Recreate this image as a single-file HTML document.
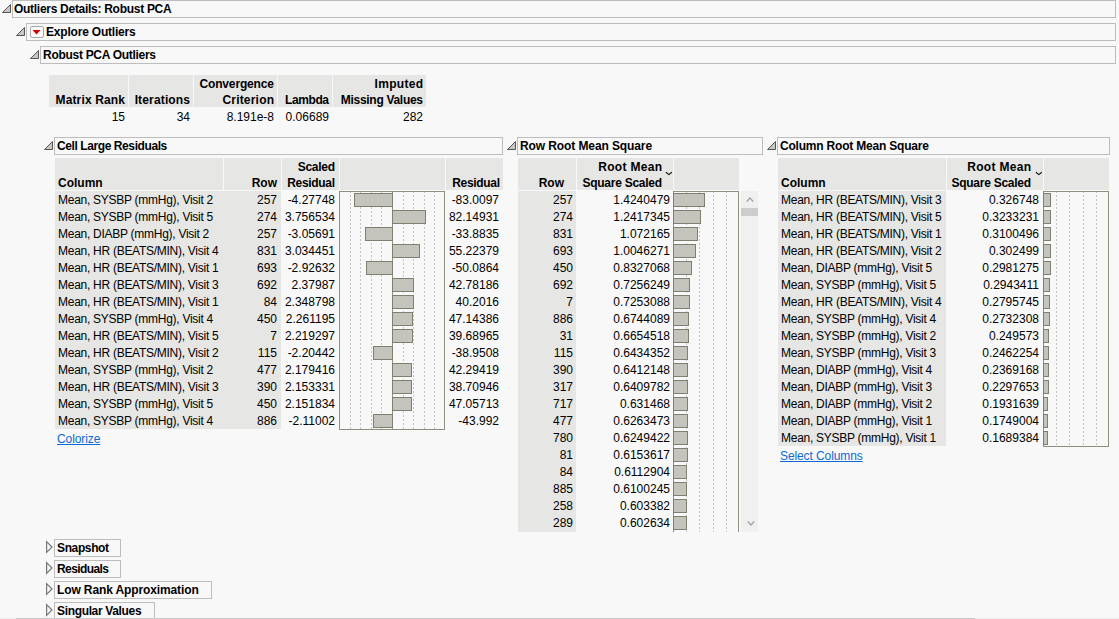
<!DOCTYPE html>
<html><head><meta charset="utf-8"><style>
html,body{margin:0;padding:0}
body{width:1119px;height:619px;overflow:hidden;position:relative;background:#f8f8f8;font-family:"Liberation Sans",sans-serif;font-size:12px;color:#000}
.t{position:absolute;white-space:nowrap;line-height:16px;}
.tx{letter-spacing:-0.27px}
.tb{letter-spacing:-0.2px}
.link{text-decoration:underline;letter-spacing:-0.1px}
</style></head><body>
<div style="position:absolute;left:12px;top:0px;width:1104px;height:18px;box-sizing:border-box;border:1px solid #bdbdbd;"></div>
<svg style="position:absolute;left:2px;top:4px" width="12" height="12"><polygon points="0.5,8.5 8.5,0.5 8.5,8.5" fill="#c6c6c6" stroke="#555" stroke-width="1" stroke-linejoin="round"/></svg>
<div class="t tb" style="top:1px;left:14px;font-weight:bold;letter-spacing:-0.285px;">Outliers Details: Robust PCA</div>
<div style="position:absolute;left:26px;top:23px;width:1090px;height:18px;box-sizing:border-box;border:1px solid #bdbdbd;"></div>
<svg style="position:absolute;left:16px;top:27px" width="12" height="12"><polygon points="0.5,8.5 8.5,0.5 8.5,8.5" fill="#c6c6c6" stroke="#555" stroke-width="1" stroke-linejoin="round"/></svg>
<div style="position:absolute;left:30px;top:26px;width:14px;height:12px;box-sizing:border-box;border:1px solid #a8a8a8;border-radius:2px;background:#fcfcfc"></div>
<svg style="position:absolute;left:32px;top:29px" width="10" height="6"><polygon points="0.5,1 8.5,1 4.5,5.5" fill="#d40000"/></svg>
<div class="t tb" style="top:24px;left:46px;font-weight:bold;letter-spacing:-0.2px;">Explore Outliers</div>
<div style="position:absolute;left:40px;top:46px;width:1076px;height:18px;box-sizing:border-box;border:1px solid #bdbdbd;"></div>
<svg style="position:absolute;left:30px;top:50px" width="12" height="12"><polygon points="0.5,8.5 8.5,0.5 8.5,8.5" fill="#c6c6c6" stroke="#555" stroke-width="1" stroke-linejoin="round"/></svg>
<div class="t tb" style="top:47px;left:43px;font-weight:bold;letter-spacing:-0.29px;">Robust PCA Outliers</div>
<div style="position:absolute;left:49px;top:75px;width:79px;height:32px;background:#e6e6e4"></div>
<div class="t " style="top:92px;left:-174.85px;width:300px;text-align:right;font-weight:bold;letter-spacing:0.15px;">Matrix Rank</div>
<div class="t " style="top:109px;left:-175px;width:300px;text-align:right;">15</div>
<div style="position:absolute;left:129px;top:75px;width:64px;height:32px;background:#e6e6e4"></div>
<div class="t " style="top:92px;left:-109.85px;width:300px;text-align:right;font-weight:bold;letter-spacing:0.15px;">Iterations</div>
<div class="t " style="top:109px;left:-110px;width:300px;text-align:right;">34</div>
<div style="position:absolute;left:194px;top:75px;width:83px;height:32px;background:#e6e6e4"></div>
<div class="t " style="top:76px;left:-26.15px;width:300px;text-align:right;font-weight:bold;letter-spacing:-0.15px;">Convergence</div>
<div class="t " style="top:92px;left:-25.8px;width:300px;text-align:right;font-weight:bold;letter-spacing:0.2px;">Criterion</div>
<div class="t " style="top:109px;left:-26px;width:300px;text-align:right;">8.191e-8</div>
<div style="position:absolute;left:278px;top:75px;width:54px;height:32px;background:#e6e6e4"></div>
<div class="t " style="top:92px;left:28.6px;width:300px;text-align:right;font-weight:bold;letter-spacing:-0.4px;">Lambda</div>
<div class="t " style="top:109px;left:29px;width:300px;text-align:right;">0.06689</div>
<div style="position:absolute;left:333px;top:75px;width:93px;height:32px;background:#e6e6e4"></div>
<div class="t " style="top:76px;left:123.3px;width:300px;text-align:right;font-weight:bold;letter-spacing:0.3px;">Imputed</div>
<div class="t " style="top:92px;left:122.7px;width:300px;text-align:right;font-weight:bold;letter-spacing:-0.3px;">Missing Values</div>
<div class="t " style="top:109px;left:123px;width:300px;text-align:right;">282</div>
<svg style="position:absolute;left:44px;top:141px" width="12" height="12"><polygon points="0.5,8.5 8.5,0.5 8.5,8.5" fill="#c6c6c6" stroke="#555" stroke-width="1" stroke-linejoin="round"/></svg>
<div style="position:absolute;left:54px;top:137px;width:449px;height:18px;box-sizing:border-box;border:1px solid #bdbdbd;"></div>
<div class="t tb" style="top:138px;left:57px;font-weight:bold;letter-spacing:-0.41px;">Cell Large Residuals</div>
<div style="position:absolute;left:55px;top:158px;width:168px;height:32px;background:#e6e6e4"></div>
<div style="position:absolute;left:224px;top:158px;width:57px;height:32px;background:#e6e6e4"></div>
<div style="position:absolute;left:282px;top:158px;width:57px;height:32px;background:#e6e6e4"></div>
<div style="position:absolute;left:340px;top:158px;width:105px;height:32px;background:#e6e6e4"></div>
<div style="position:absolute;left:446px;top:158px;width:57px;height:32px;background:#e6e6e4"></div>
<div class="t " style="top:175px;left:58px;font-weight:bold;">Column</div>
<div class="t " style="top:175px;left:-23px;width:300px;text-align:right;font-weight:bold;">Row</div>
<div class="t " style="top:159px;left:34.7px;width:300px;text-align:right;font-weight:bold;letter-spacing:-0.3px;">Scaled</div>
<div class="t " style="top:175px;left:34.67px;width:300px;text-align:right;font-weight:bold;letter-spacing:-0.33px;">Residual</div>
<div class="t " style="top:175px;left:199.67px;width:300px;text-align:right;font-weight:bold;letter-spacing:-0.33px;">Residual</div>
<div style="position:absolute;left:55px;top:191px;width:226px;height:238px;background:#e6e6e4"></div>
<div style="position:absolute;left:339px;top:191px;width:106px;height:239px;box-sizing:border-box;border:1px solid #8f8f80;"></div>
<div style="position:absolute;left:350px;top:192px;width:1px;height:237px;background:repeating-linear-gradient(to bottom,#c2c2c2 0 1px,transparent 1px 3px,#c2c2c2 3px 4px)"></div>
<div style="position:absolute;left:360px;top:192px;width:1px;height:237px;background:repeating-linear-gradient(to bottom,#c2c2c2 0 1px,transparent 1px 3px,#c2c2c2 3px 4px)"></div>
<div style="position:absolute;left:371px;top:192px;width:1px;height:237px;background:repeating-linear-gradient(to bottom,#c2c2c2 0 1px,transparent 1px 3px,#c2c2c2 3px 4px)"></div>
<div style="position:absolute;left:381px;top:192px;width:1px;height:237px;background:repeating-linear-gradient(to bottom,#c2c2c2 0 1px,transparent 1px 3px,#c2c2c2 3px 4px)"></div>
<div style="position:absolute;left:403px;top:192px;width:1px;height:237px;background:repeating-linear-gradient(to bottom,#c2c2c2 0 1px,transparent 1px 3px,#c2c2c2 3px 4px)"></div>
<div style="position:absolute;left:413px;top:192px;width:1px;height:237px;background:repeating-linear-gradient(to bottom,#c2c2c2 0 1px,transparent 1px 3px,#c2c2c2 3px 4px)"></div>
<div style="position:absolute;left:424px;top:192px;width:1px;height:237px;background:repeating-linear-gradient(to bottom,#c2c2c2 0 1px,transparent 1px 3px,#c2c2c2 3px 4px)"></div>
<div style="position:absolute;left:434px;top:192px;width:1px;height:237px;background:repeating-linear-gradient(to bottom,#c2c2c2 0 1px,transparent 1px 3px,#c2c2c2 3px 4px)"></div>
<div style="position:absolute;left:392px;top:192px;width:1px;height:237px;background:#8f8f80"></div>
<div class="t tx" style="top:192px;left:58px;">Mean, SYSBP (mmHg), Visit 2</div>
<div class="t " style="top:192px;left:-23px;width:300px;text-align:right;">257</div>
<div class="t " style="top:192px;left:35px;width:300px;text-align:right;">-4.27748</div>
<div class="t " style="top:192px;left:199px;width:300px;text-align:right;">-83.0097</div>
<div style="position:absolute;left:354px;top:193px;width:39px;height:14px;box-sizing:border-box;background:#c4c4bc;border:1px solid #7f7f70;"></div>
<div class="t tx" style="top:209px;left:58px;">Mean, SYSBP (mmHg), Visit 5</div>
<div class="t " style="top:209px;left:-23px;width:300px;text-align:right;">274</div>
<div class="t " style="top:209px;left:35px;width:300px;text-align:right;">3.756534</div>
<div class="t " style="top:209px;left:199px;width:300px;text-align:right;">82.14931</div>
<div style="position:absolute;left:392px;top:210px;width:34px;height:14px;box-sizing:border-box;background:#c4c4bc;border:1px solid #7f7f70;"></div>
<div class="t tx" style="top:226px;left:58px;">Mean, DIABP (mmHg), Visit 2</div>
<div class="t " style="top:226px;left:-23px;width:300px;text-align:right;">257</div>
<div class="t " style="top:226px;left:35px;width:300px;text-align:right;">-3.05691</div>
<div class="t " style="top:226px;left:199px;width:300px;text-align:right;">-33.8835</div>
<div style="position:absolute;left:365px;top:227px;width:28px;height:14px;box-sizing:border-box;background:#c4c4bc;border:1px solid #7f7f70;"></div>
<div class="t tx" style="top:243px;left:58px;">Mean, HR (BEATS/MIN), Visit 4</div>
<div class="t " style="top:243px;left:-23px;width:300px;text-align:right;">831</div>
<div class="t " style="top:243px;left:35px;width:300px;text-align:right;">3.034451</div>
<div class="t " style="top:243px;left:199px;width:300px;text-align:right;">55.22379</div>
<div style="position:absolute;left:392px;top:244px;width:28px;height:14px;box-sizing:border-box;background:#c4c4bc;border:1px solid #7f7f70;"></div>
<div class="t tx" style="top:260px;left:58px;">Mean, HR (BEATS/MIN), Visit 1</div>
<div class="t " style="top:260px;left:-23px;width:300px;text-align:right;">693</div>
<div class="t " style="top:260px;left:35px;width:300px;text-align:right;">-2.92632</div>
<div class="t " style="top:260px;left:199px;width:300px;text-align:right;">-50.0864</div>
<div style="position:absolute;left:366px;top:261px;width:27px;height:14px;box-sizing:border-box;background:#c4c4bc;border:1px solid #7f7f70;"></div>
<div class="t tx" style="top:277px;left:58px;">Mean, HR (BEATS/MIN), Visit 3</div>
<div class="t " style="top:277px;left:-23px;width:300px;text-align:right;">692</div>
<div class="t " style="top:277px;left:35px;width:300px;text-align:right;">2.37987</div>
<div class="t " style="top:277px;left:199px;width:300px;text-align:right;">42.78186</div>
<div style="position:absolute;left:392px;top:278px;width:22px;height:14px;box-sizing:border-box;background:#c4c4bc;border:1px solid #7f7f70;"></div>
<div class="t tx" style="top:294px;left:58px;">Mean, HR (BEATS/MIN), Visit 1</div>
<div class="t " style="top:294px;left:-23px;width:300px;text-align:right;">84</div>
<div class="t " style="top:294px;left:35px;width:300px;text-align:right;">2.348798</div>
<div class="t " style="top:294px;left:199px;width:300px;text-align:right;">40.2016</div>
<div style="position:absolute;left:392px;top:295px;width:22px;height:14px;box-sizing:border-box;background:#c4c4bc;border:1px solid #7f7f70;"></div>
<div class="t tx" style="top:311px;left:58px;">Mean, SYSBP (mmHg), Visit 4</div>
<div class="t " style="top:311px;left:-23px;width:300px;text-align:right;">450</div>
<div class="t " style="top:311px;left:35px;width:300px;text-align:right;">2.261195</div>
<div class="t " style="top:311px;left:199px;width:300px;text-align:right;">47.14386</div>
<div style="position:absolute;left:392px;top:312px;width:21px;height:14px;box-sizing:border-box;background:#c4c4bc;border:1px solid #7f7f70;"></div>
<div class="t tx" style="top:328px;left:58px;">Mean, HR (BEATS/MIN), Visit 5</div>
<div class="t " style="top:328px;left:-23px;width:300px;text-align:right;">7</div>
<div class="t " style="top:328px;left:35px;width:300px;text-align:right;">2.219297</div>
<div class="t " style="top:328px;left:199px;width:300px;text-align:right;">39.68965</div>
<div style="position:absolute;left:392px;top:329px;width:21px;height:14px;box-sizing:border-box;background:#c4c4bc;border:1px solid #7f7f70;"></div>
<div class="t tx" style="top:345px;left:58px;">Mean, HR (BEATS/MIN), Visit 2</div>
<div class="t " style="top:345px;left:-23px;width:300px;text-align:right;">115</div>
<div class="t " style="top:345px;left:35px;width:300px;text-align:right;">-2.20442</div>
<div class="t " style="top:345px;left:199px;width:300px;text-align:right;">-38.9508</div>
<div style="position:absolute;left:373px;top:346px;width:20px;height:14px;box-sizing:border-box;background:#c4c4bc;border:1px solid #7f7f70;"></div>
<div class="t tx" style="top:362px;left:58px;">Mean, SYSBP (mmHg), Visit 2</div>
<div class="t " style="top:362px;left:-23px;width:300px;text-align:right;">477</div>
<div class="t " style="top:362px;left:35px;width:300px;text-align:right;">2.179416</div>
<div class="t " style="top:362px;left:199px;width:300px;text-align:right;">42.29419</div>
<div style="position:absolute;left:392px;top:363px;width:20px;height:14px;box-sizing:border-box;background:#c4c4bc;border:1px solid #7f7f70;"></div>
<div class="t tx" style="top:379px;left:58px;">Mean, HR (BEATS/MIN), Visit 3</div>
<div class="t " style="top:379px;left:-23px;width:300px;text-align:right;">390</div>
<div class="t " style="top:379px;left:35px;width:300px;text-align:right;">2.153331</div>
<div class="t " style="top:379px;left:199px;width:300px;text-align:right;">38.70946</div>
<div style="position:absolute;left:392px;top:380px;width:20px;height:14px;box-sizing:border-box;background:#c4c4bc;border:1px solid #7f7f70;"></div>
<div class="t tx" style="top:396px;left:58px;">Mean, SYSBP (mmHg), Visit 5</div>
<div class="t " style="top:396px;left:-23px;width:300px;text-align:right;">450</div>
<div class="t " style="top:396px;left:35px;width:300px;text-align:right;">2.151834</div>
<div class="t " style="top:396px;left:199px;width:300px;text-align:right;">47.05713</div>
<div style="position:absolute;left:392px;top:397px;width:20px;height:14px;box-sizing:border-box;background:#c4c4bc;border:1px solid #7f7f70;"></div>
<div class="t tx" style="top:413px;left:58px;">Mean, SYSBP (mmHg), Visit 4</div>
<div class="t " style="top:413px;left:-23px;width:300px;text-align:right;">886</div>
<div class="t " style="top:413px;left:35px;width:300px;text-align:right;">-2.11002</div>
<div class="t " style="top:413px;left:199px;width:300px;text-align:right;">-43.992</div>
<div style="position:absolute;left:373px;top:414px;width:20px;height:14px;box-sizing:border-box;background:#c4c4bc;border:1px solid #7f7f70;"></div>
<div class="t tx link" style="top:431px;left:57px;color:#0b6bd3;">Colorize</div>
<svg style="position:absolute;left:507px;top:141px" width="12" height="12"><polygon points="0.5,8.5 8.5,0.5 8.5,8.5" fill="#c6c6c6" stroke="#555" stroke-width="1" stroke-linejoin="round"/></svg>
<div style="position:absolute;left:517px;top:137px;width:246px;height:18px;box-sizing:border-box;border:1px solid #bdbdbd;"></div>
<div class="t tb" style="top:138px;left:520px;font-weight:bold;letter-spacing:-0.1px;">Row Root Mean Square</div>
<div style="position:absolute;left:518px;top:158px;width:58px;height:32px;background:#e6e6e4"></div>
<div style="position:absolute;left:577px;top:158px;width:96px;height:32px;background:#e6e6e4"></div>
<div style="position:absolute;left:674px;top:158px;width:65px;height:32px;background:#e6e6e4"></div>
<div class="t " style="top:175px;left:264px;width:300px;text-align:right;font-weight:bold;">Row</div>
<div class="t " style="top:159px;left:362.3px;width:300px;text-align:right;font-weight:bold;letter-spacing:0.3px;">Root Mean</div>
<div class="t " style="top:175px;left:361.73px;width:300px;text-align:right;font-weight:bold;letter-spacing:-0.27px;">Square Scaled</div>
<svg style="position:absolute;left:664px;top:170px" width="10" height="7"><polyline points="1.9,2.2 4.9,4.6 7.8,2.2" fill="none" stroke="#111" stroke-width="1.15"/></svg>
<div style="position:absolute;left:518px;top:191px;width:58px;height:341px;background:#e6e6e4"></div>
<div style="position:absolute;left:673px;top:191px;width:66px;height:341px;overflow:hidden">
<div style="position:absolute;left:0px;top:0px;width:66px;height:350px;box-sizing:border-box;border:1px solid #8f8f80;"></div>
<div style="position:absolute;left:13px;top:1px;width:1px;height:340px;background:repeating-linear-gradient(to bottom,#c2c2c2 0 1px,transparent 1px 3px,#c2c2c2 3px 4px)"></div>
<div style="position:absolute;left:26px;top:1px;width:1px;height:340px;background:repeating-linear-gradient(to bottom,#c2c2c2 0 1px,transparent 1px 3px,#c2c2c2 3px 4px)"></div>
<div style="position:absolute;left:40px;top:1px;width:1px;height:340px;background:repeating-linear-gradient(to bottom,#c2c2c2 0 1px,transparent 1px 3px,#c2c2c2 3px 4px)"></div>
<div style="position:absolute;left:53px;top:1px;width:1px;height:340px;background:repeating-linear-gradient(to bottom,#c2c2c2 0 1px,transparent 1px 3px,#c2c2c2 3px 4px)"></div>
<div style="position:absolute;left:0px;top:2px;width:32px;height:14px;box-sizing:border-box;background:#c4c4bc;border:1px solid #7f7f70;"></div>
<div style="position:absolute;left:0px;top:19px;width:28px;height:14px;box-sizing:border-box;background:#c4c4bc;border:1px solid #7f7f70;"></div>
<div style="position:absolute;left:0px;top:36px;width:25px;height:14px;box-sizing:border-box;background:#c4c4bc;border:1px solid #7f7f70;"></div>
<div style="position:absolute;left:0px;top:53px;width:23px;height:14px;box-sizing:border-box;background:#c4c4bc;border:1px solid #7f7f70;"></div>
<div style="position:absolute;left:0px;top:70px;width:19px;height:14px;box-sizing:border-box;background:#c4c4bc;border:1px solid #7f7f70;"></div>
<div style="position:absolute;left:0px;top:87px;width:17px;height:14px;box-sizing:border-box;background:#c4c4bc;border:1px solid #7f7f70;"></div>
<div style="position:absolute;left:0px;top:104px;width:17px;height:14px;box-sizing:border-box;background:#c4c4bc;border:1px solid #7f7f70;"></div>
<div style="position:absolute;left:0px;top:121px;width:16px;height:14px;box-sizing:border-box;background:#c4c4bc;border:1px solid #7f7f70;"></div>
<div style="position:absolute;left:0px;top:138px;width:16px;height:14px;box-sizing:border-box;background:#c4c4bc;border:1px solid #7f7f70;"></div>
<div style="position:absolute;left:0px;top:155px;width:15px;height:14px;box-sizing:border-box;background:#c4c4bc;border:1px solid #7f7f70;"></div>
<div style="position:absolute;left:0px;top:172px;width:15px;height:14px;box-sizing:border-box;background:#c4c4bc;border:1px solid #7f7f70;"></div>
<div style="position:absolute;left:0px;top:189px;width:15px;height:14px;box-sizing:border-box;background:#c4c4bc;border:1px solid #7f7f70;"></div>
<div style="position:absolute;left:0px;top:206px;width:15px;height:14px;box-sizing:border-box;background:#c4c4bc;border:1px solid #7f7f70;"></div>
<div style="position:absolute;left:0px;top:223px;width:15px;height:14px;box-sizing:border-box;background:#c4c4bc;border:1px solid #7f7f70;"></div>
<div style="position:absolute;left:0px;top:240px;width:15px;height:14px;box-sizing:border-box;background:#c4c4bc;border:1px solid #7f7f70;"></div>
<div style="position:absolute;left:0px;top:257px;width:15px;height:14px;box-sizing:border-box;background:#c4c4bc;border:1px solid #7f7f70;"></div>
<div style="position:absolute;left:0px;top:274px;width:14px;height:14px;box-sizing:border-box;background:#c4c4bc;border:1px solid #7f7f70;"></div>
<div style="position:absolute;left:0px;top:291px;width:14px;height:14px;box-sizing:border-box;background:#c4c4bc;border:1px solid #7f7f70;"></div>
<div style="position:absolute;left:0px;top:308px;width:14px;height:14px;box-sizing:border-box;background:#c4c4bc;border:1px solid #7f7f70;"></div>
<div style="position:absolute;left:0px;top:325px;width:14px;height:14px;box-sizing:border-box;background:#c4c4bc;border:1px solid #7f7f70;"></div>
</div>
<div class="t " style="top:192px;left:273px;width:300px;text-align:right;">257</div>
<div class="t " style="top:192px;left:370px;width:300px;text-align:right;">1.4240479</div>
<div class="t " style="top:209px;left:273px;width:300px;text-align:right;">274</div>
<div class="t " style="top:209px;left:370px;width:300px;text-align:right;">1.2417345</div>
<div class="t " style="top:226px;left:273px;width:300px;text-align:right;">831</div>
<div class="t " style="top:226px;left:370px;width:300px;text-align:right;">1.072165</div>
<div class="t " style="top:243px;left:273px;width:300px;text-align:right;">693</div>
<div class="t " style="top:243px;left:370px;width:300px;text-align:right;">1.0046271</div>
<div class="t " style="top:260px;left:273px;width:300px;text-align:right;">450</div>
<div class="t " style="top:260px;left:370px;width:300px;text-align:right;">0.8327068</div>
<div class="t " style="top:277px;left:273px;width:300px;text-align:right;">692</div>
<div class="t " style="top:277px;left:370px;width:300px;text-align:right;">0.7256249</div>
<div class="t " style="top:294px;left:273px;width:300px;text-align:right;">7</div>
<div class="t " style="top:294px;left:370px;width:300px;text-align:right;">0.7253088</div>
<div class="t " style="top:311px;left:273px;width:300px;text-align:right;">886</div>
<div class="t " style="top:311px;left:370px;width:300px;text-align:right;">0.6744089</div>
<div class="t " style="top:328px;left:273px;width:300px;text-align:right;">31</div>
<div class="t " style="top:328px;left:370px;width:300px;text-align:right;">0.6654518</div>
<div class="t " style="top:345px;left:273px;width:300px;text-align:right;">115</div>
<div class="t " style="top:345px;left:370px;width:300px;text-align:right;">0.6434352</div>
<div class="t " style="top:362px;left:273px;width:300px;text-align:right;">390</div>
<div class="t " style="top:362px;left:370px;width:300px;text-align:right;">0.6412148</div>
<div class="t " style="top:379px;left:273px;width:300px;text-align:right;">317</div>
<div class="t " style="top:379px;left:370px;width:300px;text-align:right;">0.6409782</div>
<div class="t " style="top:396px;left:273px;width:300px;text-align:right;">717</div>
<div class="t " style="top:396px;left:370px;width:300px;text-align:right;">0.631468</div>
<div class="t " style="top:413px;left:273px;width:300px;text-align:right;">477</div>
<div class="t " style="top:413px;left:370px;width:300px;text-align:right;">0.6263473</div>
<div class="t " style="top:430px;left:273px;width:300px;text-align:right;">780</div>
<div class="t " style="top:430px;left:370px;width:300px;text-align:right;">0.6249422</div>
<div class="t " style="top:447px;left:273px;width:300px;text-align:right;">81</div>
<div class="t " style="top:447px;left:370px;width:300px;text-align:right;">0.6153617</div>
<div class="t " style="top:464px;left:273px;width:300px;text-align:right;">84</div>
<div class="t " style="top:464px;left:370px;width:300px;text-align:right;">0.6112904</div>
<div class="t " style="top:481px;left:273px;width:300px;text-align:right;">885</div>
<div class="t " style="top:481px;left:370px;width:300px;text-align:right;">0.6100245</div>
<div class="t " style="top:498px;left:273px;width:300px;text-align:right;">258</div>
<div class="t " style="top:498px;left:370px;width:300px;text-align:right;">0.603382</div>
<div class="t " style="top:515px;left:273px;width:300px;text-align:right;">289</div>
<div class="t " style="top:515px;left:370px;width:300px;text-align:right;">0.602634</div>
<div style="position:absolute;left:741px;top:191px;width:17px;height:341px;background:#f0f0f0"></div>
<div style="position:absolute;left:741px;top:208px;width:17px;height:8px;background:#cdcdcd"></div>
<svg style="position:absolute;left:746px;top:196px" width="9" height="7"><polyline points="0.8,5.5 4,2 7.2,5.5" fill="none" stroke="#a0a0a0" stroke-width="1.2"/></svg>
<svg style="position:absolute;left:746.5px;top:520px" width="9" height="7"><polyline points="0.8,1.5 4,5 7.2,1.5" fill="none" stroke="#a0a0a0" stroke-width="1.2"/></svg>
<svg style="position:absolute;left:767px;top:141px" width="12" height="12"><polygon points="0.5,8.5 8.5,0.5 8.5,8.5" fill="#c6c6c6" stroke="#555" stroke-width="1" stroke-linejoin="round"/></svg>
<div style="position:absolute;left:777px;top:137px;width:333px;height:18px;box-sizing:border-box;border:1px solid #bdbdbd;"></div>
<div class="t tb" style="top:138px;left:780px;font-weight:bold;letter-spacing:-0.2px;">Column Root Mean Square</div>
<div style="position:absolute;left:778px;top:158px;width:168px;height:32px;background:#e6e6e4"></div>
<div style="position:absolute;left:947px;top:158px;width:96px;height:32px;background:#e6e6e4"></div>
<div style="position:absolute;left:1044px;top:158px;width:65px;height:32px;background:#e6e6e4"></div>
<div class="t " style="top:175px;left:781px;font-weight:bold;">Column</div>
<div class="t " style="top:159px;left:731.3px;width:300px;text-align:right;font-weight:bold;letter-spacing:0.3px;">Root Mean</div>
<div class="t " style="top:175px;left:730.73px;width:300px;text-align:right;font-weight:bold;letter-spacing:-0.27px;">Square Scaled</div>
<svg style="position:absolute;left:1034px;top:170px" width="10" height="7"><polyline points="1.9,2.2 4.9,4.6 7.8,2.2" fill="none" stroke="#111" stroke-width="1.15"/></svg>
<div style="position:absolute;left:778px;top:191px;width:168px;height:255px;background:#e6e6e4"></div>
<div style="position:absolute;left:1043px;top:191px;width:66px;height:256px;overflow:hidden">
<div style="position:absolute;left:0px;top:0px;width:66px;height:256px;box-sizing:border-box;border:1px solid #8f8f80;"></div>
<div style="position:absolute;left:13px;top:1px;width:1px;height:254px;background:repeating-linear-gradient(to bottom,#c2c2c2 0 1px,transparent 1px 3px,#c2c2c2 3px 4px)"></div>
<div style="position:absolute;left:26px;top:1px;width:1px;height:254px;background:repeating-linear-gradient(to bottom,#c2c2c2 0 1px,transparent 1px 3px,#c2c2c2 3px 4px)"></div>
<div style="position:absolute;left:40px;top:1px;width:1px;height:254px;background:repeating-linear-gradient(to bottom,#c2c2c2 0 1px,transparent 1px 3px,#c2c2c2 3px 4px)"></div>
<div style="position:absolute;left:53px;top:1px;width:1px;height:254px;background:repeating-linear-gradient(to bottom,#c2c2c2 0 1px,transparent 1px 3px,#c2c2c2 3px 4px)"></div>
<div style="position:absolute;left:0px;top:2px;width:8px;height:14px;box-sizing:border-box;background:#c4c4bc;border:1px solid #7f7f70;"></div>
<div style="position:absolute;left:0px;top:19px;width:8px;height:14px;box-sizing:border-box;background:#c4c4bc;border:1px solid #7f7f70;"></div>
<div style="position:absolute;left:0px;top:36px;width:8px;height:14px;box-sizing:border-box;background:#c4c4bc;border:1px solid #7f7f70;"></div>
<div style="position:absolute;left:0px;top:53px;width:8px;height:14px;box-sizing:border-box;background:#c4c4bc;border:1px solid #7f7f70;"></div>
<div style="position:absolute;left:0px;top:70px;width:8px;height:14px;box-sizing:border-box;background:#c4c4bc;border:1px solid #7f7f70;"></div>
<div style="position:absolute;left:0px;top:87px;width:7px;height:14px;box-sizing:border-box;background:#c4c4bc;border:1px solid #7f7f70;"></div>
<div style="position:absolute;left:0px;top:104px;width:7px;height:14px;box-sizing:border-box;background:#c4c4bc;border:1px solid #7f7f70;"></div>
<div style="position:absolute;left:0px;top:121px;width:7px;height:14px;box-sizing:border-box;background:#c4c4bc;border:1px solid #7f7f70;"></div>
<div style="position:absolute;left:0px;top:138px;width:6px;height:14px;box-sizing:border-box;background:#c4c4bc;border:1px solid #7f7f70;"></div>
<div style="position:absolute;left:0px;top:155px;width:6px;height:14px;box-sizing:border-box;background:#c4c4bc;border:1px solid #7f7f70;"></div>
<div style="position:absolute;left:0px;top:172px;width:6px;height:14px;box-sizing:border-box;background:#c4c4bc;border:1px solid #7f7f70;"></div>
<div style="position:absolute;left:0px;top:189px;width:6px;height:14px;box-sizing:border-box;background:#c4c4bc;border:1px solid #7f7f70;"></div>
<div style="position:absolute;left:0px;top:206px;width:5px;height:14px;box-sizing:border-box;background:#c4c4bc;border:1px solid #7f7f70;"></div>
<div style="position:absolute;left:0px;top:223px;width:5px;height:14px;box-sizing:border-box;background:#c4c4bc;border:1px solid #7f7f70;"></div>
<div style="position:absolute;left:0px;top:240px;width:5px;height:14px;box-sizing:border-box;background:#c4c4bc;border:1px solid #7f7f70;"></div>
</div>
<div class="t tx" style="top:192px;left:781px;">Mean, HR (BEATS/MIN), Visit 3</div>
<div class="t " style="top:192px;left:739px;width:300px;text-align:right;">0.326748</div>
<div class="t tx" style="top:209px;left:781px;">Mean, HR (BEATS/MIN), Visit 5</div>
<div class="t " style="top:209px;left:739px;width:300px;text-align:right;">0.3233231</div>
<div class="t tx" style="top:226px;left:781px;">Mean, HR (BEATS/MIN), Visit 1</div>
<div class="t " style="top:226px;left:739px;width:300px;text-align:right;">0.3100496</div>
<div class="t tx" style="top:243px;left:781px;">Mean, HR (BEATS/MIN), Visit 2</div>
<div class="t " style="top:243px;left:739px;width:300px;text-align:right;">0.302499</div>
<div class="t tx" style="top:260px;left:781px;">Mean, DIABP (mmHg), Visit 5</div>
<div class="t " style="top:260px;left:739px;width:300px;text-align:right;">0.2981275</div>
<div class="t tx" style="top:277px;left:781px;">Mean, SYSBP (mmHg), Visit 5</div>
<div class="t " style="top:277px;left:739px;width:300px;text-align:right;">0.2943411</div>
<div class="t tx" style="top:294px;left:781px;">Mean, HR (BEATS/MIN), Visit 4</div>
<div class="t " style="top:294px;left:739px;width:300px;text-align:right;">0.2795745</div>
<div class="t tx" style="top:311px;left:781px;">Mean, SYSBP (mmHg), Visit 4</div>
<div class="t " style="top:311px;left:739px;width:300px;text-align:right;">0.2732308</div>
<div class="t tx" style="top:328px;left:781px;">Mean, SYSBP (mmHg), Visit 2</div>
<div class="t " style="top:328px;left:739px;width:300px;text-align:right;">0.249573</div>
<div class="t tx" style="top:345px;left:781px;">Mean, SYSBP (mmHg), Visit 3</div>
<div class="t " style="top:345px;left:739px;width:300px;text-align:right;">0.2462254</div>
<div class="t tx" style="top:362px;left:781px;">Mean, DIABP (mmHg), Visit 4</div>
<div class="t " style="top:362px;left:739px;width:300px;text-align:right;">0.2369168</div>
<div class="t tx" style="top:379px;left:781px;">Mean, DIABP (mmHg), Visit 3</div>
<div class="t " style="top:379px;left:739px;width:300px;text-align:right;">0.2297653</div>
<div class="t tx" style="top:396px;left:781px;">Mean, DIABP (mmHg), Visit 2</div>
<div class="t " style="top:396px;left:739px;width:300px;text-align:right;">0.1931639</div>
<div class="t tx" style="top:413px;left:781px;">Mean, DIABP (mmHg), Visit 1</div>
<div class="t " style="top:413px;left:739px;width:300px;text-align:right;">0.1749004</div>
<div class="t tx" style="top:430px;left:781px;">Mean, SYSBP (mmHg), Visit 1</div>
<div class="t " style="top:430px;left:739px;width:300px;text-align:right;">0.1689384</div>
<div class="t tx link" style="top:448px;left:780px;color:#0b6bd3;">Select Columns</div>
<svg style="position:absolute;left:45px;top:540px" width="10" height="14"><polygon points="1.6,1.6 7,7 1.6,12.4" fill="none" stroke="#777" stroke-width="1.2" stroke-linejoin="miter"/></svg>
<div style="position:absolute;left:54px;top:539px;width:67px;height:18px;box-sizing:border-box;border:1px solid #bdbdbd;"></div>
<div class="t tb" style="top:540px;left:57px;font-weight:bold;letter-spacing:-0.37px;">Snapshot</div>
<svg style="position:absolute;left:45px;top:561px" width="10" height="14"><polygon points="1.6,1.6 7,7 1.6,12.4" fill="none" stroke="#777" stroke-width="1.2" stroke-linejoin="miter"/></svg>
<div style="position:absolute;left:54px;top:560px;width:67px;height:18px;box-sizing:border-box;border:1px solid #bdbdbd;"></div>
<div class="t tb" style="top:561px;left:57px;font-weight:bold;letter-spacing:-0.6px;">Residuals</div>
<svg style="position:absolute;left:45px;top:582px" width="10" height="14"><polygon points="1.6,1.6 7,7 1.6,12.4" fill="none" stroke="#777" stroke-width="1.2" stroke-linejoin="miter"/></svg>
<div style="position:absolute;left:54px;top:581px;width:158px;height:18px;box-sizing:border-box;border:1px solid #bdbdbd;"></div>
<div class="t tb" style="top:582px;left:57px;font-weight:bold;letter-spacing:-0.12px;">Low Rank Approximation</div>
<svg style="position:absolute;left:45px;top:603px" width="10" height="14"><polygon points="1.6,1.6 7,7 1.6,12.4" fill="none" stroke="#777" stroke-width="1.2" stroke-linejoin="miter"/></svg>
<div style="position:absolute;left:54px;top:602px;width:101px;height:18px;box-sizing:border-box;border:1px solid #bdbdbd;"></div>
<div class="t tb" style="top:603px;left:57px;font-weight:bold;letter-spacing:-0.34px;">Singular Values</div>
<div style="position:absolute;left:0px;top:618px;width:16px;height:1px;background:#efefef"></div>
<div style="position:absolute;left:16px;top:618px;width:959px;height:1px;background:#c9c9c9"></div>
<div style="position:absolute;left:975px;top:618px;width:144px;height:1px;background:#ececec"></div>
</body></html>
